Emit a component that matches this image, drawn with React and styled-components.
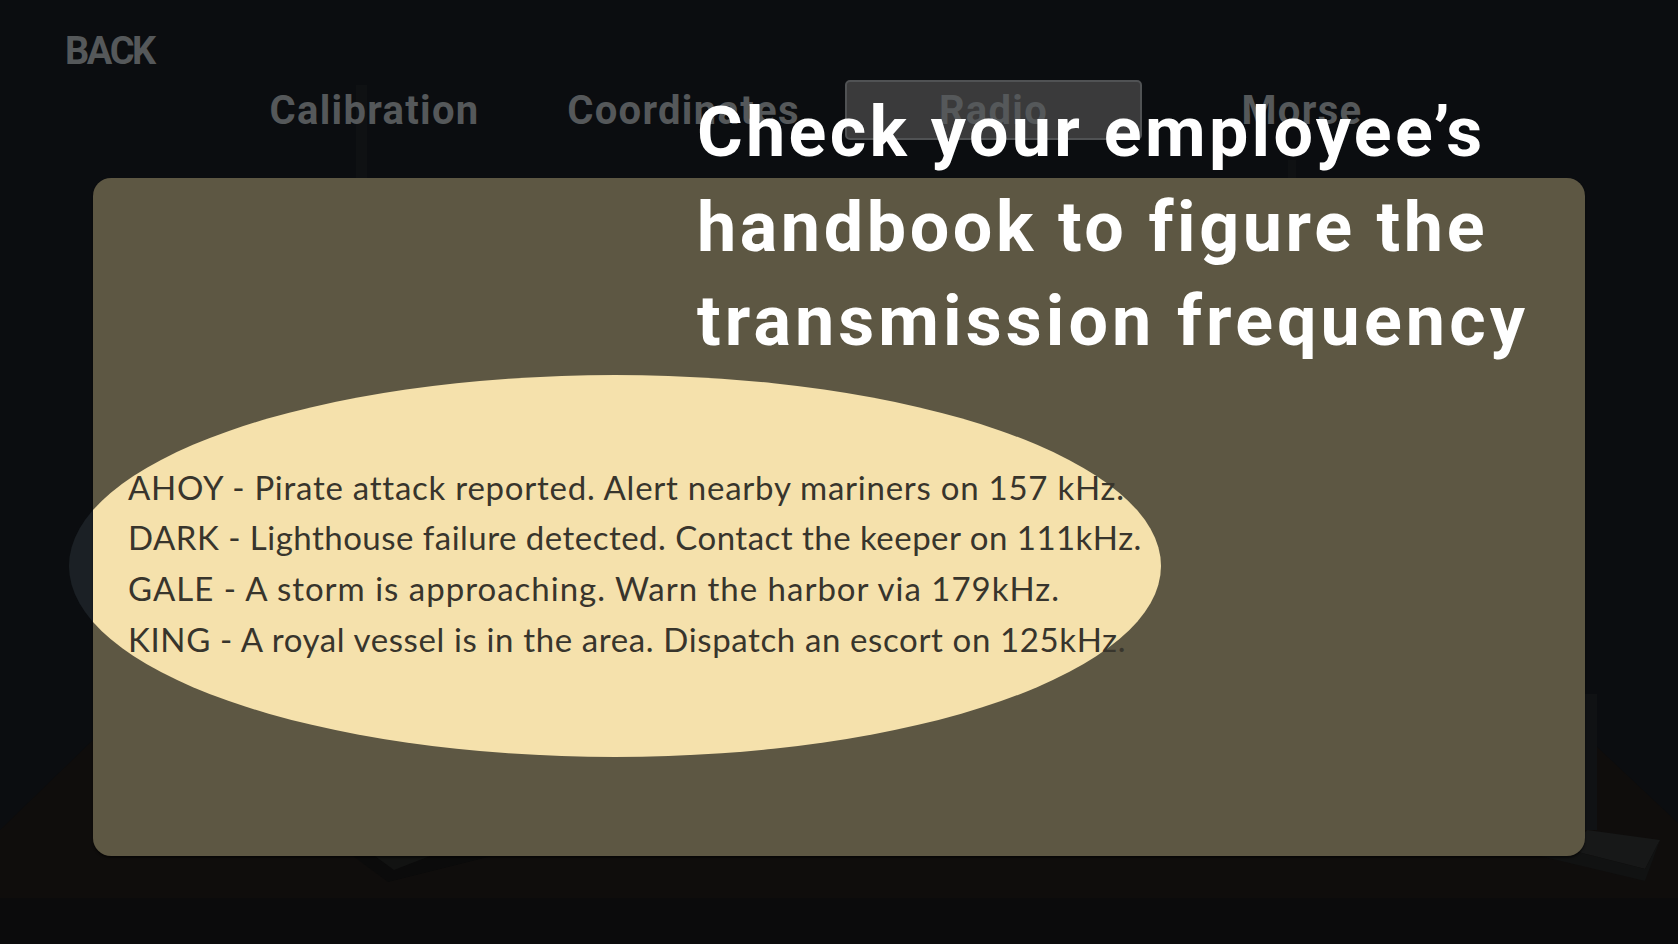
import styled, { createGlobalStyle } from "styled-components"

const lines = [
    { text: "AHOY - Pirate attack reported. Alert nearby mariners on 157 kHz.", spacing: 0.75 },
    { text: "DARK - Lighthouse failure detected. Contact the keeper on 111kHz.", spacing: 0.48 },
    { text: "GALE - A storm is approaching. Warn the harbor via 179kHz.", spacing: 0.99 },
    { text: "KING - A royal vessel is in the area. Dispatch an escort on 125kHz.", spacing: 0.62 },
]

const hintLines = [
    { text: "Check your employee’s", spacing: 3.3 },
    { text: "handbook to figure the", spacing: 3.6 },
    { text: "transmission frequency", spacing: 4.1 },
]

const GlobalStyle = createGlobalStyle`
    html, body {
        margin: 0;
        padding: 0;
        background: #0b0c0e;
    }
`

export default function App() {
    return (
        <Page>
            <GlobalStyle />
            <Backdrop viewBox="0 0 1678 944">
                <polygon points="0,830 93,740 1593,743 1678,823 1678,898 0,898" fill="#0f0d0c" />
                <rect x="0" y="898" width="1678" height="46" fill="#0b0b0c" />
                <rect x="356" y="85" width="11" height="93" fill="#0f1113" />
                <rect x="1288" y="160" width="8" height="18" fill="#0f1113" />
                <rect x="1585" y="694" width="12" height="136" fill="#101214" />
                <polygon points="1587,830 1660,840 1645,869 1570,850" fill="#171818" />
                <polygon points="1570,850 1645,869 1660,840 1645,881 1540,856" fill="#111212" />
                <polygon points="353,856 388,882 492,856" fill="#0b0b0b" />
                <polygon points="375,856 394,870 430,856" fill="#121312" />
            </Backdrop>
            <DarkEllipse />
            <BackButton>BACK</BackButton>
            <Tabs>
                <Tab $width={207} $gap={89}>Calibration</Tab>
                <Tab $width={233} $gap={45}>Coordinates</Tab>
                <Tab $width={297} $gap={99} $active>Radio</Tab>
                <Tab $width={122}>Morse</Tab>
            </Tabs>
            <Panel>
                <Spotlight>
                    {lines.map((line) => (
                        <Line key={line.text} $spacing={line.spacing}>{line.text}</Line>
                    ))}
                </Spotlight>
            </Panel>
            <Hint>
                {hintLines.map((line) => (
                    <HintLine key={line.text} $spacing={line.spacing}>{line.text}</HintLine>
                ))}
            </Hint>
        </Page>
    )
}

const Page = styled.div`
    position: relative;
    isolation: isolate;
    width: 1678px;
    height: 944px;
    overflow: hidden;
    display: flex;
    flex-direction: column;
    align-items: flex-start;
    padding: 29px 93px 88px 65px;
    box-sizing: border-box;
    background: #0b0d10;
`
const Backdrop = styled.svg`
    position: absolute;
    inset: 0;
    width: 100%;
    height: 100%;
    z-index: -2;
`
const DarkEllipse = styled.div`
    position: absolute;
    left: 69px;
    top: 375px;
    width: 1092px;
    height: 382px;
    border-radius: 50%;
    background: #1b2025;
    z-index: -1;
`
const BackButton = styled.div`
    font-family: Roboto, sans-serif;
    font-weight: 700;
    font-size: 38px;
    line-height: 44px;
    letter-spacing: -2.4px;
    color: #55585a;
`
const Tabs = styled.div`
    display: flex;
    align-items: center;
    height: 60px;
    margin-top: 7px;
    margin-left: 206px;
`
const Tab = styled.div`
    width: ${(props) => props.$width}px;
    margin-right: ${(props) => props.$gap || 0}px;
    height: 60px;
    box-sizing: border-box;
    display: flex;
    align-items: center;
    justify-content: center;
    font-family: Roboto, sans-serif;
    font-weight: 700;
    font-size: 40px;
    letter-spacing: 1.3px;
    white-space: nowrap;
    color: #55585a;
    border-radius: 5px;
    border: ${(props) => (props.$active ? "2px solid #505254" : "none")};
    background: ${(props) => (props.$active ? "#3a3a3b" : "transparent")};
`
const Panel = styled.div`
    position: relative;
    flex: 1;
    align-self: stretch;
    margin-top: 38px;
    margin-left: 28px;
    background: #5d5743;
    border-radius: 18px;
    overflow: hidden;
    box-shadow: 0 2px 2px rgba(0, 0, 0, 0.5);
`
const Spotlight = styled.div`
    position: absolute;
    left: -24px;
    top: 197px;
    width: 1092px;
    height: 382px;
    box-sizing: border-box;
    border-radius: 50%;
    background: #f5e1ac;
    display: flex;
    flex-direction: column;
    justify-content: center;
    padding: 0 0 6px 59px;
`
const Line = styled.div`
    font-family: Lato, sans-serif;
    font-size: 33px;
    line-height: 50.7px;
    letter-spacing: ${(props) => props.$spacing}px;
    color: #38352c;
    white-space: nowrap;
`
const Hint = styled.div`
    position: absolute;
    left: 697px;
    top: 85px;
    display: flex;
    flex-direction: column;
`
const HintLine = styled.div`
    font-family: Roboto, sans-serif;
    font-weight: 700;
    font-size: 70px;
    line-height: 94.5px;
    letter-spacing: ${(props) => props.$spacing}px;
    color: #ffffff;
    white-space: nowrap;
`
